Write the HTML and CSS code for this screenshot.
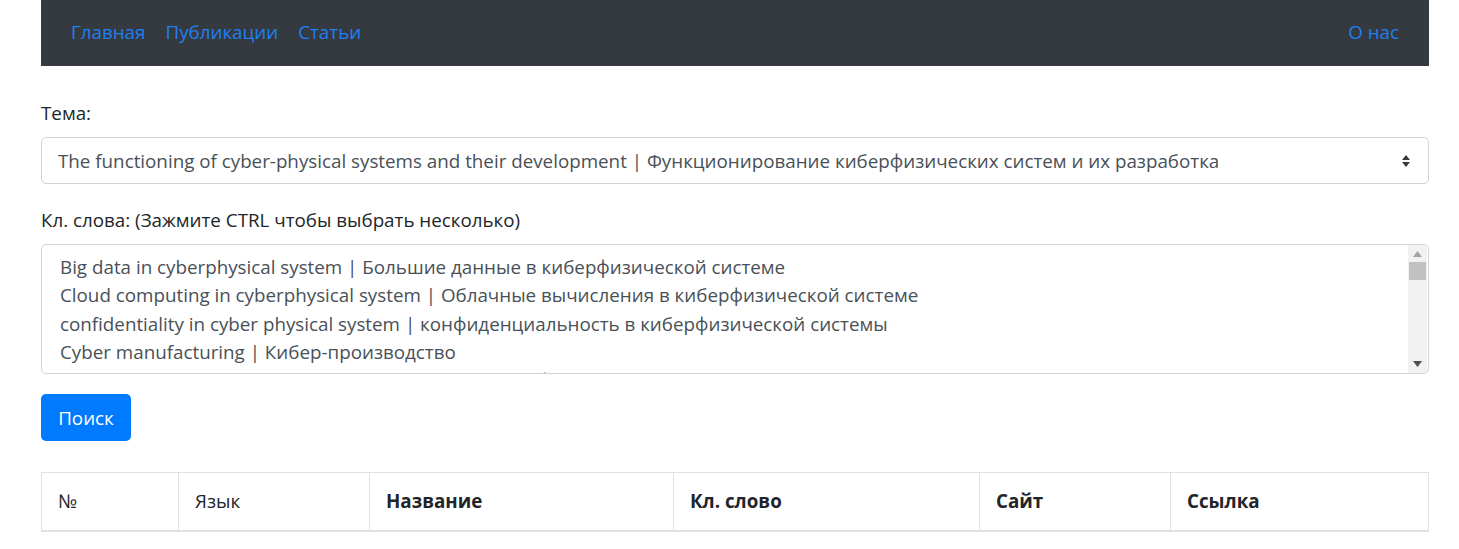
FILE: index.html
```html
<!DOCTYPE html>
<html lang="ru">
<head>
<meta charset="utf-8">
<title>Поиск публикаций</title>
<link rel="stylesheet" href="styles.css">
</head>
<body>
<div class="page">
  <nav class="navbar">
    <div class="nav-left">
      <a class="nav-link" href="#">Главная</a>
      <a class="nav-link" href="#">Публикации</a>
      <a class="nav-link" href="#">Статьи</a>
    </div>
    <a class="nav-link" href="#">О нас</a>
  </nav>

  <form class="search-form">
    <div class="form-group">
      <label class="form-label">Тема:</label>
      <div class="select-box">
        <span class="select-text">The functioning of cyber-physical systems and their development | Функционирование киберфизических систем и их разработка</span>
        <svg class="select-arrow" width="10" height="14" viewBox="0 0 10 14"><path d="M5 1 L9 6 H1 Z M5 13 L9 8 H1 Z" fill="#343a40"/></svg>
      </div>
    </div>

    <div class="form-group">
      <label class="form-label">Кл. слова: (Зажмите CTRL чтобы выбрать несколько)</label>
      <div class="listbox">
        <div class="list-options">
          <div class="option">Big data in cyberphysical system | Большие данные в киберфизической системе</div>
          <div class="option">Cloud computing in cyberphysical system | Облачные вычисления в киберфизической системе</div>
          <div class="option">confidentiality in cyber physical system | конфиденциальность в киберфизической системы</div>
          <div class="option">Cyber manufacturing | Кибер-производство</div>
          <div class="option">Cyber-physical systems and Internet of Things | Киберфизические системы и интернет вещей</div>
        </div>
        <div class="scrollbar">
          <svg class="sb-arrow" width="9" height="6" viewBox="0 0 9 6"><path d="M4.5 0 L9 6 H0 Z" fill="#a3a3a3"/></svg>
          <div class="sb-track"><div class="sb-thumb"></div></div>
          <svg class="sb-arrow" width="9" height="6" viewBox="0 0 9 6"><path d="M0 0 H9 L4.5 6 Z" fill="#505050"/></svg>
        </div>
      </div>
    </div>

    <button type="button" class="btn-primary">Поиск</button>
  </form>

  <table class="results">
    <thead>
      <tr>
        <th class="c1 light">№</th>
        <th class="c2 light">Язык</th>
        <th class="c3">Название</th>
        <th class="c4">Кл. слово</th>
        <th class="c5">Сайт</th>
        <th class="c6">Ссылка</th>
      </tr>
    </thead>
  </table>
</div>
</body>
</html>
```

FILE: styles.css
```css
html, body {
  margin: 0;
  padding: 0;
  background: #fff;
}
body {
  font-family: "Open Sans", "Noto Sans", sans-serif;
  font-size: 18.8px;
  color: #212529;
}
.page {
  width: 1388px;
  margin-left: 41px;
}
.navbar {
  height: 66px;
  background: #343a40;
  display: flex;
  align-items: center;
  justify-content: space-between;
  padding: 0 30px;
  box-sizing: border-box;
}
.nav-left {
  display: flex;
  gap: 20px;
}
.nav-link {
  color: #1f7ff0;
  text-decoration: none;
  line-height: 1;
  position: relative;
  top: -1px;
}
.search-form {
  padding-top: 34px;
}
.form-group {
  margin-bottom: 23px;
}
.form-label {
  display: block;
  line-height: 26px;
  margin-bottom: 11px;
}
.select-box {
  height: 47px;
  border: 1px solid #ced4da;
  border-radius: 5px;
  box-sizing: border-box;
  display: flex;
  align-items: center;
  justify-content: space-between;
  padding: 0 17px 0 16px;
  color: #495057;
}
.select-text {
  white-space: nowrap;
}
.listbox {
  height: 130px;
  border: 1px solid #ced4da;
  border-radius: 5px;
  box-sizing: border-box;
  display: flex;
  overflow: hidden;
  color: #495057;
}
.list-options {
  flex: 1;
  padding: 8px 0 0 18px;
  overflow: hidden;
}
.option {
  line-height: 28.3px;
  white-space: nowrap;
}
.scrollbar {
  width: 19px;
  margin-right: 1px;
  background: #f1f1f1;
  display: flex;
  flex-direction: column;
  align-items: center;
  padding: 6px 0;
  box-sizing: border-box;
}
.sb-arrow {
  flex: none;
}
.sb-track {
  flex: 1;
  width: 100%;
  padding: 5px 1px 0;
  box-sizing: border-box;
}
.sb-thumb {
  height: 18px;
  background: #c1c1c1;
}
.btn-primary {
  display: block;
  width: 90px;
  height: 47px;
  border: none;
  border-radius: 5px;
  background: #007bff;
  color: #fff;
  font: inherit;
  padding: 0;
  margin-top: -3px;
}
.results {
  margin-top: 31px;
  width: 1387px;
  border-collapse: collapse;
  table-layout: fixed;
}
.results th {
  height: 58px;
  text-align: left;
  padding: 0 16px;
  border: 1px solid #dee2e6;
  border-bottom: 2px solid #dee2e6;
  font-weight: 700;
  box-sizing: border-box;
}
.results th.light {
  font-weight: 400;
}
.c1 { width: 137px; }
.c2 { width: 191px; }
.c3 { width: 304px; }
.c4 { width: 306px; }
.c5 { width: 191px; }
.c6 { width: 258px; }
```
